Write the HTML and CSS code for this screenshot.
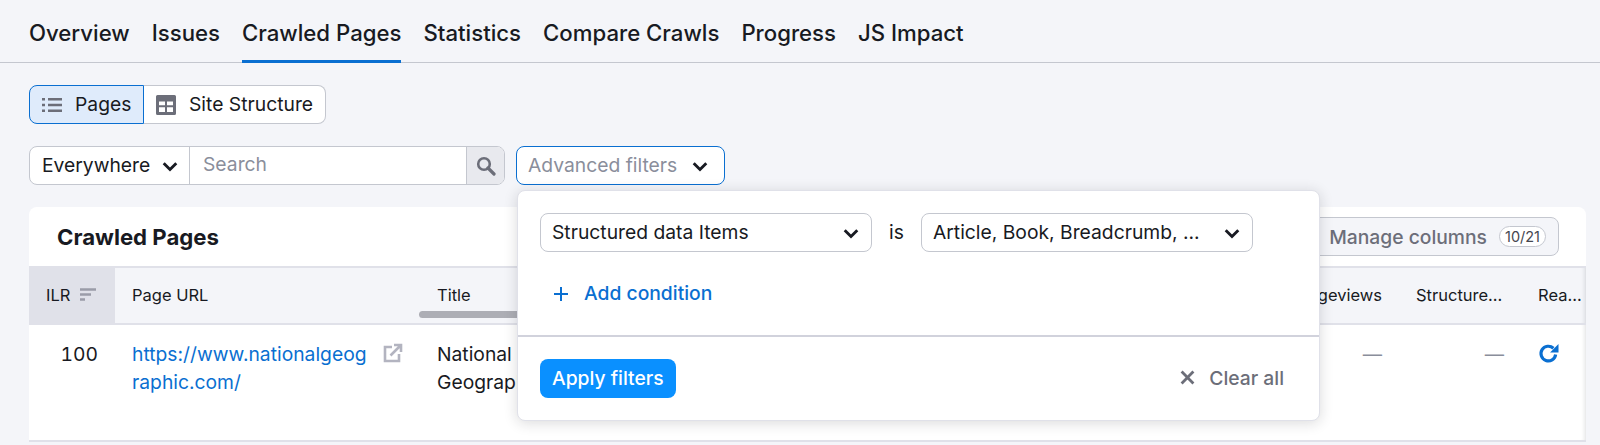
FILE: index.html

```html
<!DOCTYPE html>
<html lang="en">
<head>
  <meta charset="UTF-8" />
  <meta name="viewport" content="width=device-width, initial-scale=1.0" />
  <title>Crawled Pages</title>
  <link rel="stylesheet" href="styles.css">
</head>
<body>
  <nav class="tabs">
    <a class="tab">Overview</a>
    <a class="tab">Issues</a>
    <a class="tab active">Crawled Pages</a>
    <a class="tab">Statistics</a>
    <a class="tab">Compare Crawls</a>
    <a class="tab">Progress</a>
    <a class="tab">JS Impact</a>
  </nav>

  <main class="content">
    <div class="switch">
      <button class="switch-btn on">
        <svg class="icon" viewBox="0 0 20 20"><path d="M0 3h3v2.400H0zM0 8.800h3v2.400H0zM0 14.600h3V17H0zM6 3h14v2.400H6zM6 8.800h14v2.400H6zM6 14.600h14V17H6z" fill="#6c6e79"/></svg>
        Pages
      </button>
      <button class="switch-btn">
        <svg class="icon" viewBox="0 0 20 20"><path fill-rule="evenodd" d="M1.500 0h17A1.500 1.500 0 0 1 20 1.500v17a1.500 1.500 0 0 1-1.500 1.500h-17A1.500 1.500 0 0 1 0 18.500v-17A1.500 1.500 0 0 1 1.500 0zM3 6.500v3.800h6V6.500zm8 0v3.800h6V6.500zM3 12.200V17h6v-4.800zm8 0V17h6v-4.800z" fill="#6c6e79"/></svg>
        Site Structure
      </button>
    </div>

    <div class="filters">
      <div class="search">
        <div class="search-scope">Everywhere <svg class="chev" viewBox="0 0 14 14"><path d="M1.500 4.500l5.500 5.500 5.500-5.500" /></svg></div>
        <div class="search-input">Search</div>
        <div class="search-btn">
          <svg viewBox="0 0 20 20" width="20" height="20"><circle cx="8" cy="8" r="5.800" fill="none" stroke="#6c6e79" stroke-width="2.600"/><path d="M12 12l6 6" stroke="#6c6e79" stroke-width="3.200" stroke-linecap="round"/></svg>
        </div>
      </div>
      <div class="adv-wrap">
        <button class="adv-btn">Advanced filters <svg class="chev" viewBox="0 0 14 14"><path d="M1.500 4.500l5.500 5.500 5.500-5.500" /></svg></button>

        <div class="popup">
          <div class="popup-body">
            <div class="condition">
              <div class="select">Structured data Items <svg class="chev" viewBox="0 0 14 14"><path d="M1.500 4.500l5.500 5.500 5.500-5.500" /></svg></div>
              <span class="is">is</span>
              <div class="select">Article, Book, Breadcrumb, ... <svg class="chev" viewBox="0 0 14 14"><path d="M1.500 4.500l5.500 5.500 5.500-5.500" /></svg></div>
            </div>
            <a class="add-cond">
              <svg viewBox="0 0 14 14" width="14" height="14"><path d="M7 0v14M0 7h14" stroke="#0a6fd1" stroke-width="2"/></svg>
              Add condition
            </a>
          </div>
          <div class="popup-foot">
            <button class="apply">Apply filters</button>
            <a class="clear">
              <svg viewBox="0 0 14 14" width="15" height="15"><path d="M1.500 1.500l11 11M12.500 1.500l-11 11" stroke="#6c6e79" stroke-width="2.600"/></svg>
              Clear all
            </a>
          </div>
        </div>
      </div>
    </div>

    <section class="card">
      <header class="card-head">
        <h2>Crawled Pages</h2>
        <button class="manage">Manage columns <span class="badge">10/21</span></button>
      </header>
      <table class="grid">
        <colgroup>
          <col class="c-ilr"><col class="c-url"><col class="c-title"><col><col class="c-views"><col class="c-struct"><col class="c-read">
        </colgroup>
        <thead>
          <tr>
            <th class="sorted">ILR
              <svg viewBox="0 0 18 14" width="18" height="14"><path d="M1 1.500h16M1 6.500h11M1 11.500h5" stroke="#9a9ca8" stroke-width="2.400"/></svg>
            </th>
            <th>Page URL</th>
            <th>Title</th>
            <th></th>
            <th class="right">Pageviews</th>
            <th>Structure...</th>
            <th class="edge">Rea...</th>
          </tr>
        </thead>
        <tbody>
          <tr>
            <td class="num">100</td>
            <td>
              <div class="url-cell">
                <a class="url">https://www.nationalgeographic.com/</a>
                <svg viewBox="0 0 20 20" width="20" height="20"><path d="M9 4H2v14h14v-7" fill="none" stroke="#b3b4c0" stroke-width="2.600"/><path d="M7.500 12.500L17 3M11 2h7v7" fill="none" stroke="#b3b4c0" stroke-width="2.600"/></svg>
              </div>
            </td>
            <td>National Geographic</td>
            <td></td>
            <td class="dash">—</td>
            <td class="dash">—</td>
            <td class="reload edge">
              <svg viewBox="0 0 20 20" width="21" height="21"><path d="M16.800 11a7 7 0 1 1-2.100-6" fill="none" stroke="#0a6fd1" stroke-width="3"/><path d="M19.500 1v8h-8z" fill="#0a6fd1"/></svg>
            </td>
          </tr>
        </tbody>
      </table>
      <div class="scrollbar"></div>
    </section>
  </main>
</body>
</html>
```

FILE: styles.css

```css
* { box-sizing: border-box; }
html, body {
  height: 445px;
  overflow: hidden;
}
body {
  margin: 0;
  font-family: Inter, 'Liberation Sans', sans-serif;
  font-size: 19.300px;
  color: #181a22;
  background: #f4f5f9;
}
button {
  font: inherit;
  color: inherit;
  cursor: pointer;
}
svg { flex: none; }
.chev {
  width: 16px;
  height: 16px;
  margin-top: 2px;
  fill: none;
  stroke: #181a22;
  stroke-width: 2.500;
}

/* tabs */
.tabs {
  display: flex;
  gap: 22px;
  height: 63px;
  padding: 0 29px;
  border-bottom: 1px solid #c4c7cf;
}
.tab {
  height: 63px;
  padding-top: 19px;
  font-size: 22.200px;
  font-weight: 500;
  line-height: 28px;
}
.tab.active { border-bottom: 3px solid #0a6fd1; }

.content { padding: 22px 14px 0 29px; }

/* pages / site structure */
.switch { display: flex; height: 39px; }
.switch-btn {
  display: flex;
  align-items: center;
  gap: 13px;
  height: 39px;
  padding: 0 12px 2px;
  background: #fff;
  border: 1px solid #c4c7cf;
  border-left: 0;
  border-radius: 0 8px 8px 0;
}
.switch-btn svg { margin-top: 2px; }
.switch-btn.on {
  width: 115px;
  background: #dfebfb;
  border: 1px solid #0a6fd1;
  border-radius: 8px 0 0 8px;
}
.icon { width: 20px; height: 20px; }

/* search row */
.filters {
  display: flex;
  gap: 11px;
  margin-top: 22px;
}
.search {
  display: flex;
  width: 476px;
  height: 39px;
  background: #fff;
  border: 1px solid #c4c7cf;
  border-radius: 8px;
  overflow: hidden;
}
.search-scope {
  display: flex;
  align-items: center;
  gap: 12px;
  width: 160px;
  padding: 0 0 2px 12px;
  border-right: 1px solid #c4c7cf;
}
.search-input {
  flex: 1;
  padding-left: 13px;
  line-height: 35px;
  color: #8a8e9b;
}
.search-btn {
  display: flex;
  align-items: center;
  justify-content: center;
  width: 38px;
  background: #e8e9ee;
  border-left: 1px solid #c4c7cf;
}
.adv-wrap { position: relative; }
.adv-btn {
  display: flex;
  align-items: center;
  gap: 15px;
  width: 209px;
  height: 39px;
  padding: 0 11px 2px;
  color: #8a8e9b;
  background: #fff;
  border: 1px solid #0a6fd1;
  border-radius: 8px;
}

/* filter popup */
.popup {
  position: absolute;
  top: 44px;
  left: 1px;
  z-index: 5;
  width: 803px;
  height: 231px;
  background: #fff;
  border: 1px solid #e0e1e9;
  border-radius: 8px;
  box-shadow: 0 2px 14px rgba(24, 26, 34, 0.16);
}
.popup-body {
  height: 146px;
  padding: 22px 22px 0;
  border-bottom: 2px solid #d1d2dc;
}
.condition {
  display: flex;
  align-items: center;
}
.select {
  display: flex;
  align-items: center;
  justify-content: space-between;
  width: 332px;
  height: 39px;
  padding: 0 12px 2px 11px;
  border: 1px solid #c4c7cf;
  border-radius: 8px;
}
.is { width: 49px; padding-bottom: 2px; text-align: center; }
.add-cond {
  display: flex;
  align-items: center;
  gap: 16px;
  margin: 22px 0 0 14px;
  height: 37px;
  font-weight: 500;
  color: #0a6fd1;
}
.add-cond svg { margin-top: 2px; }
.popup-foot {
  display: flex;
  align-items: center;
  justify-content: space-between;
  padding: 22px 35px 0 22px;
}
.apply {
  height: 39px;
  padding: 0 12px 2px;
  font-weight: 500;
  color: #fff;
  background: #0a90ff;
  border: 0;
  border-radius: 8px;
}
.clear {
  display: flex;
  align-items: center;
  gap: 14px;
  padding-bottom: 2px;
  font-weight: 500;
  color: #6c6e79;
}

/* table card */
.card {
  position: relative;
  margin-top: 22px;
  background: #fff;
  border-radius: 8px 8px 0 0;
  overflow: hidden;
}
.card-head {
  display: flex;
  align-items: center;
  justify-content: space-between;
  height: 59px;
  padding: 0 27px 0 28px;
}
.card-head h2 {
  margin: 0;
  font-size: 22.200px;
  font-weight: 700;
}
.manage {
  display: flex;
  align-items: center;
  gap: 12px;
  height: 39px;
  padding: 0 12px 0 240px;
  color: #6c6e79;
  font-weight: 500;
  background: #f4f5f9;
  border: 1px solid #c4c7cf;
  border-radius: 8px;
}
.badge {
  padding: 0 5px;
  font-size: 14.500px;
  line-height: 19px;
  font-weight: 400;
  color: #45474f;
  background: #fff;
  border: 1px solid #c4c7cf;
  border-radius: 12px;
}
.grid {
  width: 100%;
  table-layout: fixed;
  border-collapse: collapse;
}
.c-ilr { width: 86px; }
.c-url { width: 305px; }
.c-title { width: 170px; }
.c-views { width: 140px; }
.c-struct { width: 122px; }
.c-read { width: 65px; }
.grid th {
  height: 57px;
  padding: 0 17px 2px;
  font-size: 16.500px;
  font-weight: 400;
  text-align: left;
  white-space: nowrap;
  background: #f4f5f9;
  border-top: 2px solid #e0e1e9;
  border-bottom: 2px solid #e0e1e9;
}
.grid th.sorted { background: #e0e1e9; }
.grid th.sorted svg { margin-left: 4px; vertical-align: -1px; }
.grid th.right { text-align: right; }
.grid td {
  height: 117px;
  padding: 15px 17px;
  line-height: 28px;
  vertical-align: top;
  border-bottom: 2px solid #e0e1e9;
}
.grid td.num {
  text-align: right;
  font-variant-numeric: tabular-nums;
}
.grid td.dash {
  text-align: right;
  color: #8a8e9b;
}
.grid .edge { box-shadow: inset -5px 0 4px -4px rgba(24, 26, 34, 0.14); }
.url-cell {
  display: flex;
  align-items: flex-start;
  gap: 12px;
}
.url {
  width: 240px;
  color: #0a6fd1;
  overflow-wrap: anywhere;
}
.url-cell svg { margin-top: 3px; }
.reload svg { margin-top: 3px; }
.scrollbar {
  position: absolute;
  left: 390px;
  top: 104px;
  width: 300px;
  height: 7px;
  background: #adaeb5;
  border-radius: 4px;
}
```
